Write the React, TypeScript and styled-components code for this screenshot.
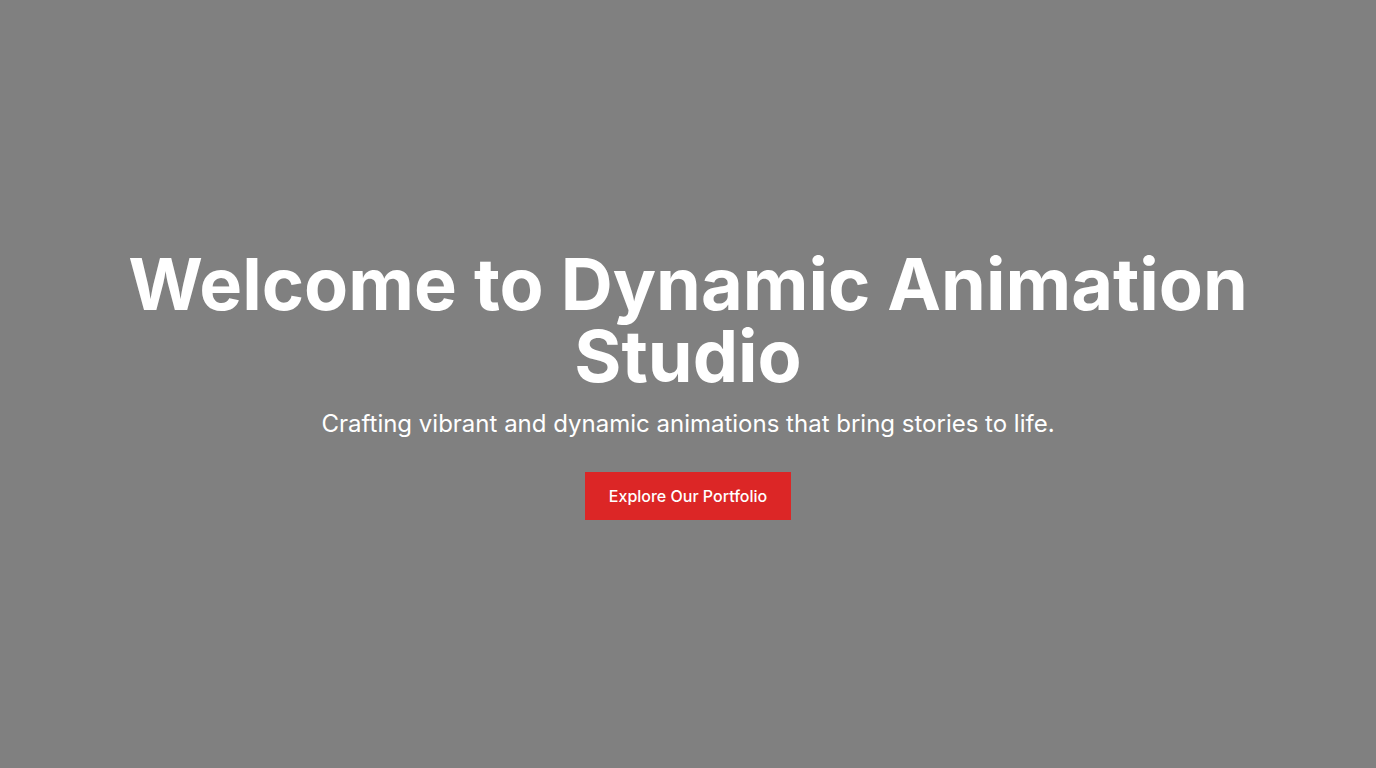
import React from "react";
import styled, { createGlobalStyle } from "styled-components";

const GlobalStyle = createGlobalStyle`
  html, body {
    margin: 0;
    padding: 0;
    background: #808080;
    font-family: Inter, "Noto Sans", Arial, sans-serif;
  }
  * { box-sizing: border-box; }
`;

const Hero = styled.section`
  min-height: 768px;
  display: flex;
  flex-direction: column;
  align-items: center;
  justify-content: center;
  padding: 0 16px;
  background: #808080;
  color: #ffffff;
  text-align: center;
`;

const Title = styled.h1`
  margin: 0 0 16px;
  font-size: 72px;
  line-height: 72px;
  font-weight: 700;
  color: #ffffff;
`;

const Subtitle = styled.p`
  margin: 0 0 32px;
  font-size: 24px;
  line-height: 32px;
  font-weight: 400;
  color: #ffffff;
`;

const CTA = styled.a`
  display: inline-block;
  padding: 12px 24px;
  background: #dc2626;
  color: #ffffff;
  font-size: 16px;
  line-height: 24px;
  font-weight: 500;
  text-decoration: none;
  cursor: pointer;
`;

export default function App() {
  return (
    <>
      <GlobalStyle />
      <Hero>
        <Title>Welcome to Dynamic Animation Studio</Title>
        <Subtitle>Crafting vibrant and dynamic animations that bring stories to life.</Subtitle>
        <CTA href="#portfolio">Explore Our Portfolio</CTA>
      </Hero>
    </>
  );
}
